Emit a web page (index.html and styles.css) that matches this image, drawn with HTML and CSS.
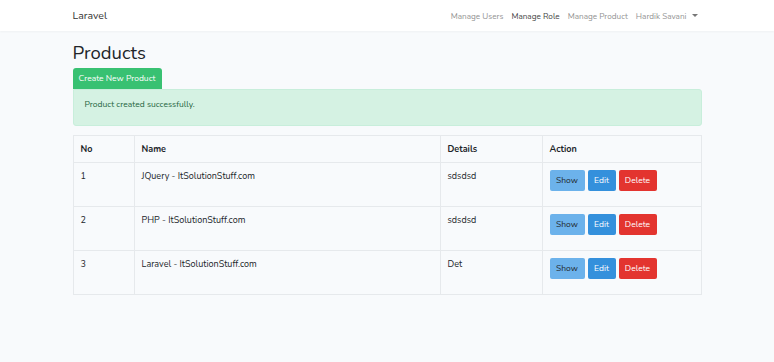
FILE: index.html
```html
<!DOCTYPE html>
<html lang="en">
<head>
    <meta charset="UTF-8">
    <meta name="viewport" content="width=device-width, initial-scale=1.0">
    <title>Products</title>
    <link rel="stylesheet" href="styles.css">
</head>
<body>
    <!-- Top navigation -->
    <nav class="navbar">
        <div class="nav-inner">
            <a class="brand" href="#">Laravel</a>
            <ul class="nav-links">
                <li><a href="#">Manage Users</a></li>
                <li><a href="#" class="active">Manage Role</a></li>
                <li><a href="#">Manage Product</a></li>
                <li><a href="#" class="dropdown">Hardik Savani</a></li>
            </ul>
        </div>
    </nav>

    <main class="container">
        <h2 class="page-title">Products</h2>
        <a href="#" class="btn btn-success">Create New Product</a>

        <div class="alert-success">
            <p>Product created successfully.</p>
        </div>

        <table class="table">
            <thead>
                <tr>
                    <th class="col-no">No</th>
                    <th class="col-name">Name</th>
                    <th class="col-details">Details</th>
                    <th>Action</th>
                </tr>
            </thead>
            <tbody>
                <tr>
                    <td>1</td>
                    <td>JQuery - ItSolutionStuff.com</td>
                    <td>sdsdsd</td>
                    <td>
                        <form class="actions">
                            <a href="#" class="btn btn-info">Show</a>
                            <a href="#" class="btn btn-primary">Edit</a>
                            <button type="button" class="btn btn-danger">Delete</button>
                        </form>
                    </td>
                </tr>
                <tr>
                    <td>2</td>
                    <td>PHP - ItSolutionStuff.com</td>
                    <td>sdsdsd</td>
                    <td>
                        <form class="actions">
                            <a href="#" class="btn btn-info">Show</a>
                            <a href="#" class="btn btn-primary">Edit</a>
                            <button type="button" class="btn btn-danger">Delete</button>
                        </form>
                    </td>
                </tr>
                <tr>
                    <td>3</td>
                    <td>Laravel - ItSolutionStuff.com</td>
                    <td>Det</td>
                    <td>
                        <form class="actions">
                            <a href="#" class="btn btn-info">Show</a>
                            <a href="#" class="btn btn-primary">Edit</a>
                            <button type="button" class="btn btn-danger">Delete</button>
                        </form>
                    </td>
                </tr>
            </tbody>
        </table>
    </main>
</body>
</html>
```

FILE: styles.css
```css
* {
    margin: 0;
    padding: 0;
    box-sizing: border-box;
}

body {
    font-family: 'Nunito', Lato, 'Noto Sans', sans-serif;
    font-size: 9px;
    color: #212529;
    background-color: #f8fafc;
    min-height: 100vh;
}

a {
    text-decoration: none;
}

/* Navbar */
.navbar {
    background-color: #fff;
    box-shadow: 0 1px 2px rgba(0, 0, 0, 0.04);
    height: 31px;
}

.nav-inner {
    width: 629px;
    margin: 0 auto;
    height: 100%;
    display: flex;
    align-items: center;
    justify-content: space-between;
}

.brand {
    font-size: 10.5px;
    color: #333;
}

.nav-links {
    list-style: none;
    display: flex;
    gap: 8px;
    margin-right: 4px;
}

.nav-links a {
    color: #939393;
    font-size: 8.2px;
}

.nav-links a.active {
    color: #444;
}

.nav-links a.dropdown::after {
    content: "";
    display: inline-block;
    margin-left: 5px;
    vertical-align: 2px;
    border-top: 3px solid #777;
    border-left: 3px solid transparent;
    border-right: 3px solid transparent;
}

/* Page content */
.container {
    width: 629px;
    margin: 0 auto;
    padding-top: 11px;
}

.page-title {
    font-size: 18.5px;
    font-weight: 400;
    line-height: 22px;
    margin-bottom: 4px;
}

.btn {
    display: inline-block;
    font-family: inherit;
    font-size: 8.5px;
    line-height: 13px;
    padding: 4px 0;
    border: none;
    border-radius: 2px;
    color: #fff;
    cursor: pointer;
    white-space: nowrap;
    text-align: center;
}

.btn-success {
    background-color: #38c172;
    border-radius: 3px 3px 0 0;
    height: 21px;
    width: 89px;
    display: block;
}

.alert-success {
    background-color: #d5f2e3;
    border: 1px solid #c8eedb;
    border-radius: 0 3px 3px 3px;
    color: #1f6540;
    height: 37px;
    padding: 8px 11px;
    margin-bottom: 9px;
}

.alert-success p {
    font-size: 8.5px;
}

/* Table */
.table {
    width: 629px;
    border-collapse: collapse;
    border: 1px solid #e6e9ec;
}

.table th,
.table td {
    border: 1px solid #e6e9ec;
    text-align: left;
    vertical-align: top;
    padding: 7px 7px;
    font-size: 9px;
}

.table th {
    font-weight: 700;
    height: 27px;
    vertical-align: middle;
    padding-top: 6px;
}

.table td {
    height: 44px;
}

.col-no {
    width: 61px;
}

.col-name {
    width: 306px;
}

.col-details {
    width: 102px;
}

.actions {
    display: flex;
    gap: 3px;
}

.btn-info {
    background-color: #6cb2eb;
    color: #212529;
    width: 35px;
    height: 21px;
}

.btn-primary {
    background-color: #3490dc;
    width: 28px;
    height: 21px;
}

.btn-danger {
    background-color: #e3342f;
    width: 38px;
    height: 21px;
}
```
